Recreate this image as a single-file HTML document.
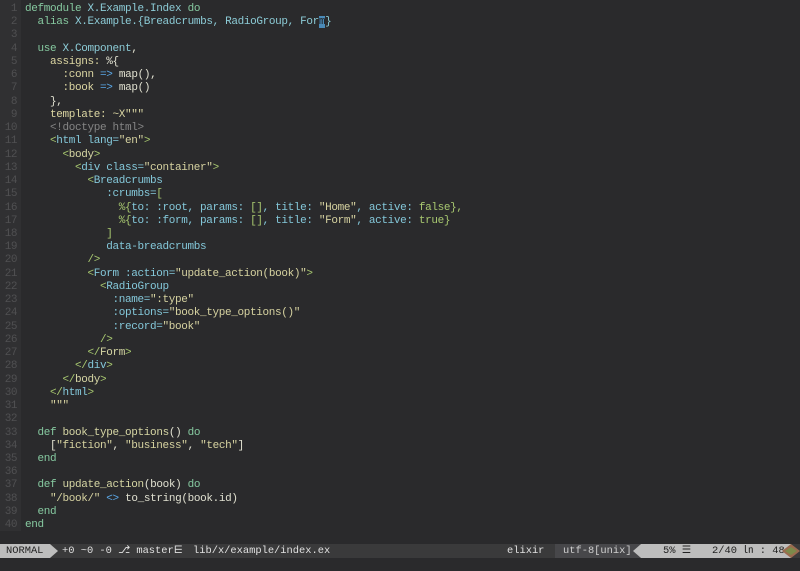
<!DOCTYPE html>
<html><head><meta charset="utf-8"><style>
html,body{margin:0;padding:0;width:800px;height:571px;background:#2a2a2c;overflow:hidden;font-family:"Liberation Mono","DejaVu Sans Mono",monospace;}
.gut{position:absolute;left:0;top:0;width:21px;height:531px;background:#303032;}
.code{position:absolute;left:0;top:3px;font-size:11px;letter-spacing:-0.35px;line-height:13.23px;color:#e0e0d0;white-space:pre;}
.ln{display:inline-block;width:17px;text-align:right;color:#505052;margin-right:8px;letter-spacing:-0.5px;}
.k{color:#86c9a0}.m{color:#8ccbd6}.s{color:#d6d2a0}.a{color:#dcd6a2}.o{color:#5aa8e8}.c{color:#858585}.t{color:#a8c870}.n{color:#84c8da}.y{color:#d6d6a4}
.cur{background:#4a8ab8;color:#1c1c1c}
.sb{position:absolute;left:0;top:544px;width:800px;height:14px;background:#3a3a3b;font-size:10.4px;line-height:14px;color:#e0e0e0;white-space:pre;}
.sb span{position:absolute;top:0;}
</style></head><body>
<div class="gut"></div>
<div class="code"><span class="ln">1</span><span class="k">defmodule</span> <span class="m">X.Example.Index</span> <span class="k">do</span>
<span class="ln">2</span>  <span class="k">alias</span> <span class="m">X.Example.{Breadcrumbs, RadioGroup, For<span class="cur">m</span>}</span>
<span class="ln">3</span>
<span class="ln">4</span>  <span class="k">use</span> <span class="m">X.Component</span>,
<span class="ln">5</span>    <span class="a">assigns:</span> %{
<span class="ln">6</span>      <span class="a">:conn</span> <span class="o">=&gt;</span> map(),
<span class="ln">7</span>      <span class="a">:book</span> <span class="o">=&gt;</span> map()
<span class="ln">8</span>    },
<span class="ln">9</span>    <span class="a">template:</span> <span class="s">~X"""</span>
<span class="ln">10</span>    <span class="c">&lt;!doctype html&gt;</span>
<span class="ln">11</span>    <span class="t">&lt;</span><span class="n">html lang=</span><span class="s">"en"</span><span class="t">&gt;</span>
<span class="ln">12</span>      <span class="t">&lt;</span><span class="y">body</span><span class="t">&gt;</span>
<span class="ln">13</span>        <span class="t">&lt;</span><span class="n">div class=</span><span class="s">"container"</span><span class="t">&gt;</span>
<span class="ln">14</span>          <span class="t">&lt;</span><span class="n">Breadcrumbs</span>
<span class="ln">15</span>             <span class="n">:crumbs=</span><span class="t">[</span>
<span class="ln">16</span>               <span class="t">%{</span><span class="n">to: :root, params: </span><span class="t">[]</span><span class="n">, title: </span><span class="s">"Home"</span><span class="n">, active: </span><span class="t">false},</span>
<span class="ln">17</span>               <span class="t">%{</span><span class="n">to: :form, params: </span><span class="t">[]</span><span class="n">, title: </span><span class="s">"Form"</span><span class="n">, active: </span><span class="t">true}</span>
<span class="ln">18</span>             <span class="t">]</span>
<span class="ln">19</span>             <span class="n">data-breadcrumbs</span>
<span class="ln">20</span>          <span class="t">/&gt;</span>
<span class="ln">21</span>          <span class="t">&lt;</span><span class="n">Form :action=</span><span class="s">"update_action(book)"</span><span class="t">&gt;</span>
<span class="ln">22</span>            <span class="t">&lt;</span><span class="n">RadioGroup</span>
<span class="ln">23</span>              <span class="n">:name=</span><span class="s">":type"</span>
<span class="ln">24</span>              <span class="n">:options=</span><span class="s">"book_type_options()"</span>
<span class="ln">25</span>              <span class="n">:record=</span><span class="s">"book"</span>
<span class="ln">26</span>            <span class="t">/&gt;</span>
<span class="ln">27</span>          <span class="t">&lt;/</span><span class="y">Form</span><span class="t">&gt;</span>
<span class="ln">28</span>        <span class="t">&lt;/</span><span class="n">div</span><span class="t">&gt;</span>
<span class="ln">29</span>      <span class="t">&lt;/</span><span class="y">body</span><span class="t">&gt;</span>
<span class="ln">30</span>    <span class="t">&lt;/</span><span class="n">html</span><span class="t">&gt;</span>
<span class="ln">31</span>    <span class="s">"""</span>
<span class="ln">32</span>
<span class="ln">33</span>  <span class="k">def</span> <span class="y">book_type_options</span>() <span class="k">do</span>
<span class="ln">34</span>    [<span class="s">"fiction"</span>, <span class="s">"business"</span>, <span class="s">"tech"</span>]
<span class="ln">35</span>  <span class="k">end</span>
<span class="ln">36</span>
<span class="ln">37</span>  <span class="k">def</span> <span class="y">update_action</span>(book) <span class="k">do</span>
<span class="ln">38</span>    <span class="s">"/book/"</span> <span class="o">&lt;&gt;</span> to_string(book.id)
<span class="ln">39</span>  <span class="k">end</span>
<span class="ln">40</span><span class="k">end</span></div>
<div class="sb">
<div style="position:absolute;left:0;top:0;width:50px;height:14px;background:#bdbdbd"></div>
<svg style="position:absolute;left:50px;top:0" width="8" height="14"><polygon points="0,0 8,7 0,14" fill="#bdbdbd"/></svg>
<span style="left:6px;color:#222">NORMAL</span>
<span style="left:62px">+0 ~0 -0 ⎇ master⋿</span>
<span style="left:193px">lib/x/example/index.ex</span>
<div style="position:absolute;left:555px;top:0;width:85px;height:14px;background:#47474a"></div>
<span style="left:507px">elixir</span>
<span style="left:563px;color:#cfcfcf">utf-8[unix]</span>
<svg style="position:absolute;left:633px;top:0" width="8" height="14"><polygon points="8,0 0,7 8,14" fill="#bdbdbd"/></svg>
<div style="position:absolute;left:641px;top:0;width:150px;height:14px;background:#bdbdbd"></div>
<span style="left:663px;color:#222">5% ☰</span>
<span style="left:712px;color:#222">2/40 ㏑ : 48</span>
<svg style="position:absolute;left:782px;top:0" width="18" height="14"><polygon points="9,0 0,7 9,14 18,7" fill="#9a6b50"/><polygon points="9,3 3,7 9,11 15,7" fill="#7c8a4a"/></svg>
</div>
</body></html>
